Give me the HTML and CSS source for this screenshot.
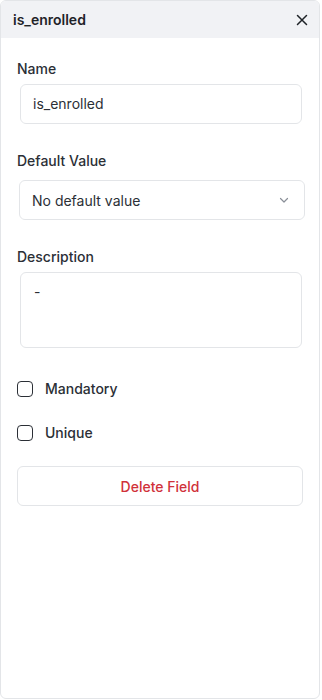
FILE: index.html
```html
<!DOCTYPE html>
<html lang="en">
<head>
  <meta charset="UTF-8" />
  <meta name="viewport" content="width=device-width, initial-scale=1" />
  <title>Field settings</title>
  <link rel="stylesheet" href="styles.css">
</head>
<body>
  <div class="panel">
    <div class="panel-head">
      <span class="panel-title">is_enrolled</span>
      <button class="close-btn" aria-label="Close">
        <svg width="12" height="12" viewBox="0 0 12 12"><path d="M1.5 1.5l9 9M10.5 1.5l-9 9" stroke="#1f2328" stroke-width="1.5" stroke-linecap="round"/></svg>
      </button>
    </div>

    <div class="panel-body">
      <div class="field">
        <label class="field-label">Name</label>
        <div class="input name-input">is_enrolled</div>
      </div>

      <div class="field">
        <label class="field-label">Default Value</label>
        <div class="input select-input">
          <span>No default value</span>
          <svg width="12" height="12" viewBox="0 0 12 12"><path d="M2.5 4.5l3.5 3.5 3.5-3.5" fill="none" stroke="#8a8f98" stroke-width="1.2" stroke-linecap="round" stroke-linejoin="round"/></svg>
        </div>
      </div>

      <div class="field">
        <label class="field-label">Description</label>
        <div class="input textarea">-</div>
      </div>

      <div class="checks">
        <label class="check"><span class="box"></span>Mandatory</label>
        <label class="check"><span class="box"></span>Unique</label>
      </div>

      <button class="delete-btn">Delete Field</button>
    </div>
  </div>
</body>
</html>
```

FILE: styles.css
```css
html, body {
  margin: 0;
  padding: 0;
  background: #fff;
  font-family: 'Inter', 'Liberation Sans', sans-serif;
  color: #2b2f36;
}
.panel {
  width: 318px;
  height: 697px;
  border: 1px solid #e3e5e8;
  border-radius: 6px;
  overflow: hidden;
  background: #fff;
}
.panel-head {
  height: 37px;
  display: flex;
  align-items: center;
  justify-content: space-between;
  padding: 0 10px 0 12px;
  background: #f1f2f5;
}
.panel-title {
  font-size: 14px;
  font-weight: 600;
  color: #1f2328;
}
.close-btn {
  border: 0;
  background: none;
  padding: 0;
  width: 14px;
  height: 14px;
  display: flex;
  align-items: center;
  justify-content: center;
}
.panel-body {
  padding: 21px 16px 0 16px;
}
.field {
  display: flex;
  flex-direction: column;
  margin-bottom: 27px;
}
.field-label {
  font-size: 14px;
  font-weight: 500;
  line-height: 20px;
  color: #2b2f36;
}
.input {
  box-sizing: border-box;
  border: 1px solid #e3e5e8;
  border-radius: 6px;
  font-size: 14px;
  color: #2b2f36;
  padding: 0 12px;
}
.name-input {
  margin: 5px 1px 0 3px;
  height: 40px;
  line-height: 38px;
}
.select-input {
  margin: 9px -2px 0 2px;
  height: 40px;
  display: flex;
  align-items: center;
  justify-content: space-between;
  padding-right: 14px;
}
.textarea {
  margin: 5px 1px 0 3px;
  height: 76px;
  padding: 9px 13px;
  line-height: 20px;
}
.checks {
  display: flex;
  flex-direction: column;
  gap: 24px;
  margin-top: 31px;
}
.check {
  display: flex;
  align-items: center;
  gap: 12px;
  font-size: 14px;
  font-weight: 500;
  line-height: 20px;
}
.box {
  width: 14px;
  height: 14px;
  border: 1.5px solid #2b2f36;
  border-radius: 4px;
}
.delete-btn {
  display: block;
  width: 286px;
  height: 40px;
  margin-top: 23px;
  border: 1px solid #e3e5e8;
  border-radius: 6px;
  background: #fff;
  font-family: inherit;
  font-size: 14px;
  font-weight: 500;
  color: #d0313a;
}
```
